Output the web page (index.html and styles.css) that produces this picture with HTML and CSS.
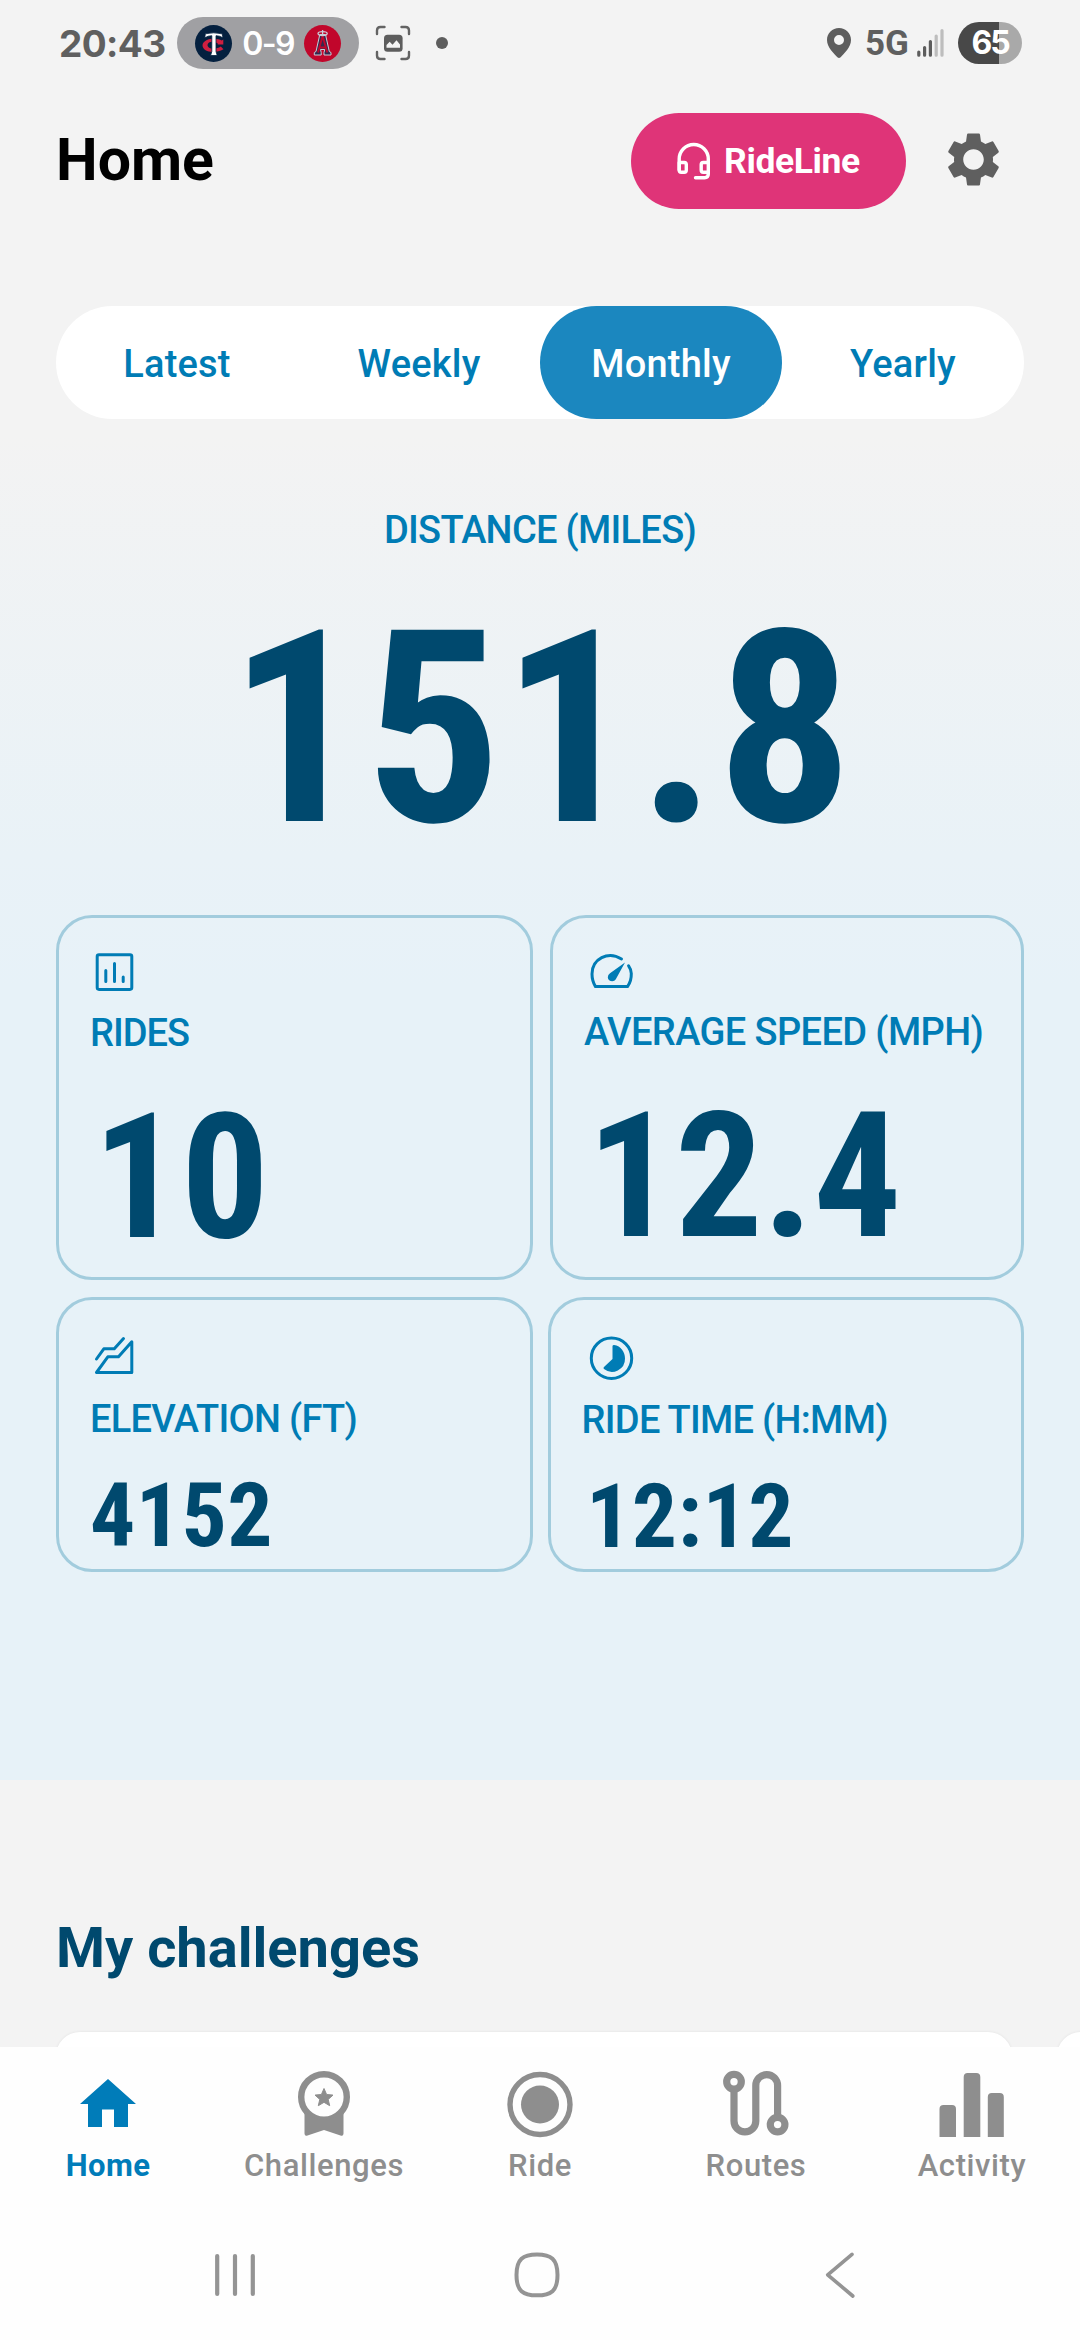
FILE: index.html
```html
<!DOCTYPE html>
<html lang="en">
<head>
<meta charset="utf-8">
<title>Home</title>
<link rel="stylesheet" href="styles.css">
</head>
<body>
<div class="screen">
  <div class="status">
    <span class="clock">20:43</span>
    <div class="score">
      <svg width="37" height="37" viewBox="0 0 37 37">
        <circle cx="18.5" cy="18.5" r="18.5" fill="#04203f"/>
        <path d="M28.300 19.500V14.500L26.800 15.600C22 12.300 8.500 12.800 7.500 20C7.500 27.500 20 29 28.500 24.300L25.800 21.500C21 24.800 12.500 24.300 12.500 20C12.500 16 20 15.600 23 18.800L22.500 19.500Z" fill="#d01f40"/>
        <path d="M9.800 12.800L10.300 8.800Q18.500 6.800 27.200 8.800L28 12.800Q24.500 10.700 21 10.700V26.500L22.200 30.500H15.600L16.800 26.500V10.700Q13 10.700 9.800 12.800Z" fill="#fff" stroke="#04203f" stroke-width=".8"/>
      </svg>
      <span class="score-text">0-9</span>
      <svg width="37" height="37" viewBox="0 0 37 37">
        <circle cx="18.500" cy="18.500" r="18.500" fill="#c1062b"/>
        <path d="M15.800 9.500L12 26.500L10.300 27.500V30H17.200V27.500L16.500 24.500H20.800L20 27.500V30H27V27.500L25.300 26.500L21.500 9.500Z" fill="#35294f" stroke="#c9ced8" stroke-width="1"/>
        <path d="M18.600 11L14 27.500M18.600 11L23.300 27.500M15.500 22.500H21.800" fill="none" stroke="#c1062b" stroke-width="1.900"/>
        <ellipse cx="18.600" cy="8.600" rx="4.600" ry="1.900" fill="none" stroke="#c9ced8" stroke-width="1.300"/>
        <path d="M18.600 5V9.500" stroke="#c9ced8" stroke-width="1.300"/>
      </svg>
    </div>
    <svg class="scan" width="36" height="36" viewBox="0 0 36 36">
      <path d="M2 9V5.500Q2 2 5.500 2H9.500M26.500 2H30.500Q34 2 34 5.500V9M34 27V30.500Q34 34 30.500 34H26.500M9.500 34H5.500Q2 34 2 30.500V27" fill="none" stroke="#636363" stroke-width="2.400" stroke-linecap="round"/>
      <rect x="9" y="9.700" width="18.600" height="17" rx="3.500" fill="#5d5d5d"/>
      <path d="M11.500 22.800V20L14.700 16.800L17.500 19.800L21.500 15.200L25 19.500V22.800Z" fill="#f3f3f3"/>
    </svg>
    <span class="dot"></span>
    <svg class="pin" width="24" height="30" viewBox="0 0 24 30">
      <path fill-rule="evenodd" d="M12 0C18.700 0 24 5.300 24 12C24 19.500 17 25.500 13.600 29.200Q12 30.600 10.400 29.200C7 25.500 0 19.500 0 12C0 5.300 5.300 0 12 0ZM12 7A5 5 0 1 0 12 17A5 5 0 1 0 12 7Z" fill="#5d5d5d"/>
    </svg>
    <span class="network">5G</span>
    <svg class="signal" width="27" height="30" viewBox="0 0 27 30" fill="none" stroke-width="3.200" stroke-linecap="round">
      <path d="M1.800 24V27.200M7.600 19.500V27.200M13.400 13.500V27.200" stroke="#5d5d5d"/>
      <path d="M19.200 8V27.200M25 2.500V27.200" stroke="#bdbdbd"/>
    </svg>
    <span class="battery">65</span>
  </div>

  <header class="header">
    <h1 class="title">Home</h1>
    <div class="rideline">
      <svg width="34" height="38" viewBox="0 0 34 38" fill="none" stroke="#fff" stroke-width="3.400" stroke-linecap="round" stroke-linejoin="round">
        <path d="M2.200 28V17A14.500 14.500 0 0 1 31.300 17V32Q31.300 35.700 27.600 35.700H18.500"/>
        <path d="M2.200 20.500H7.200Q9.300 20.500 9.300 22.600V28Q9.300 30.200 7.200 30.200H4.300Q2.200 30.200 2.200 28ZM31.300 20.500H26.300Q24.200 20.500 24.200 22.600V28Q24.200 30.200 26.300 30.200H31.300"/>
      </svg>
      <span>RideLine</span>
    </div>
    <svg class="gear" width="65" height="65" viewBox="0 0 24 24">
      <path fill="#5f5f5f" d="M19.140 12.940c.04-.3.060-.61.060-.94 0-.32-.02-.64-.07-.94l2.030-1.580c.18-.14.230-.41.120-.61l-1.920-3.320c-.12-.22-.37-.29-.59-.22l-2.390.960c-.5-.38-1.030-.7-1.620-.94l-.36-2.540c-.04-.24-.24-.41-.48-.41h-3.840c-.24 0-.43.170-.47.410l-.36 2.540c-.59.240-1.130.570-1.620.940l-2.390-.96c-.22-.08-.47 0-.59.220L2.740 8.870c-.12.210-.08.470.120.610l2.030 1.580c-.05.3-.09.630-.09.940s.02.640.070.940l-2.030 1.580c-.18.140-.23.410-.12.610l1.920 3.320c.12.220.37.290.59.220l2.390-.96c.5.380 1.030.7 1.620.940l.36 2.540c.05.240.24.410.48.410h3.840c.24 0 .44-.17.470-.41l.36-2.540c.59-.24 1.130-.56 1.620-.94l2.390.96c.22.080.47 0 .59-.22l1.920-3.320c.12-.22.070-.47-.12-.61l-2.010-1.580zM12 15.800c-2.100 0-3.800-1.700-3.800-3.800s1.700-3.800 3.800-3.800 3.800 1.700 3.800 3.800-1.700 3.800-3.800 3.800z"/>
    </svg>
  </header>

  <main class="hero">
    <nav class="tabs">
      <span class="tab">Latest</span>
      <span class="tab">Weekly</span>
      <span class="tab active">Monthly</span>
      <span class="tab">Yearly</span>
    </nav>
    <div class="label distance-label">DISTANCE (MILES)</div>
    <div class="number distance">151.8</div>

    <div class="cards">
      <section class="card rides">
        <svg width="44" height="44" viewBox="0 0 44 44" fill="none" stroke="#007cb5" stroke-width="3" stroke-linecap="round">
          <rect x="5.200" y="4.800" width="34.600" height="34.600" rx="1.800"/>
          <path d="M13.800 20.500V31.500M22.500 13.500V31.500M31.200 27V31.500"/>
        </svg>
        <div class="label">RIDES</div>
        <div class="number">10</div>
      </section>
      <section class="card speed">
        <svg width="44" height="44" viewBox="0 0 44 44">
          <path d="M35.500 9C22 0.500 6 9 6 24Q6 31 9.500 36.600H41.500Q45.500 31 45.300 23.500Q45 19 42.600 15.800" fill="none" stroke="#007cb5" stroke-width="3" stroke-linecap="round" stroke-linejoin="round"/>
          <path d="M39 12.500L29.800 29.300C28 32.600 21.800 31.500 21.800 27.300Q21.800 24.800 24 23.300Z" fill="#007cb5"/>
        </svg>
        <div class="label">AVERAGE SPEED (MPH)</div>
        <div class="number">12.4</div>
      </section>
    </div>

    <div class="cards small">
      <section class="card elevation">
        <svg width="44" height="44" viewBox="0 0 44 44" fill="none" stroke="#007cb5" stroke-width="3" stroke-linecap="round" stroke-linejoin="round">
          <path d="M4.500 26L11.800 15.800H22.300L31.500 5.500"/>
          <path d="M4.500 39.500H39.800V8.800L26.500 23.800H15.800Z"/>
        </svg>
        <div class="label">ELEVATION (FT)</div>
        <div class="number">4152</div>
      </section>
      <section class="card time">
        <svg width="46" height="48" viewBox="0 0 46 48">
          <circle cx="24.500" cy="25.200" r="20.200" fill="none" stroke="#007cb5" stroke-width="3"/>
          <path d="M25.500 13.300Q25.500 12 27 12C34 13 38 19 38 25.500A13 13 0 0 1 17 36Q15.900 35 17 34L25.500 26Z" fill="#007cb5"/>
        </svg>
        <div class="label">RIDE TIME (H:MM)</div>
        <div class="number">12:12</div>
      </section>
    </div>
  </main>

  <section class="challenges">
    <h2 class="section-title">My challenges</h2>
    <div class="carousel">
      <div class="challenge"></div>
      <div class="challenge"></div>
    </div>
  </section>

  <nav class="bottom">
    <div class="item current">
      <svg width="72" height="72" viewBox="0 0 72 72"><path d="M36 11L64 36H56V59H42V41.500H30V59H16V36H8Z" fill="#007cb9"/></svg>
      <span>Home</span>
    </div>
    <div class="item">
      <svg width="72" height="72" viewBox="0 0 72 72">
        <circle cx="36" cy="29" r="22.800" fill="none" stroke="#8e8e8e" stroke-width="6.400"/>
        <path d="M16.500 43Q26 52 36 52Q46 52 55.500 43V65.500Q55.500 68.300 52.500 67.500L36 62L19.500 67.500Q16.500 68.300 16.500 65.500Z" fill="#8e8e8e"/>
        <path d="M36 20.500L38.600 26.500L45 27.100L40.200 31.400L41.700 37.700L36 34.300L30.300 37.700L31.800 31.400L27 27.100L33.400 26.500Z" fill="#8e8e8e" stroke="#8e8e8e" stroke-linejoin="round"/>
      </svg>
      <span>Challenges</span>
    </div>
    <div class="item">
      <svg width="72" height="72" viewBox="0 0 72 72">
        <circle cx="36" cy="36.500" r="30" fill="none" stroke="#8e8e8e" stroke-width="5.400"/>
        <circle cx="36" cy="36.500" r="19" fill="#8e8e8e"/>
      </svg>
      <span>Ride</span>
    </div>
    <div class="item">
      <svg width="72" height="72" viewBox="0 0 72 72" fill="none" stroke="#8e8e8e" stroke-width="7.200">
        <path d="M14 20V53A10.900 10.900 0 0 0 35.800 53V17.500A10.900 10.900 0 0 1 57.600 17.500V50"/>
        <circle cx="14" cy="13.700" r="7.300"/>
        <circle cx="57.600" cy="56.600" r="7.300"/>
      </svg>
      <span>Routes</span>
    </div>
    <div class="item">
      <svg width="72" height="72" viewBox="0 0 72 72" fill="#8e8e8e">
        <path d="M3.500 69V41Q3.500 37 7.500 37H16Q20 37 20 41V69ZM27.700 69V9Q27.700 5 31.700 5H40.300Q44.300 5 44.300 9V69ZM51.800 69V29Q51.800 25 55.800 25H63.800Q67.800 25 67.800 29V69Z"/>
      </svg>
      <span>Activity</span>
    </div>
  </nav>

  <div class="system">
    <svg width="48" height="48" viewBox="0 0 48 48" fill="none" stroke="#949494" stroke-width="4.200" stroke-linecap="round"><path d="M6.200 6V44M24 6V44M41.800 6V44"/></svg>
    <svg width="48" height="48" viewBox="0 0 48 48" fill="none" stroke="#949494" stroke-width="4"><path d="M24 4.500C38 4.500 44.500 9 44.500 25S38 45.300 24 45.300S3.500 41 3.500 25S10 4.500 24 4.500Z"/></svg>
    <svg width="48" height="48" viewBox="0 0 48 48" fill="none" stroke="#949494" stroke-width="3.600" stroke-linecap="round" stroke-linejoin="round"><path d="M37 4.300L12.700 24.800L37.800 46"/></svg>
  </div>
</div>
</body>
</html>
```
FILE: styles.css
```css
* { box-sizing: border-box; }

body {
  margin: 0;
  background: #f3f3f3;
  font-family: Roboto, "Liberation Sans", sans-serif;
}

svg { display: block; flex: none; overflow: visible; }

.screen {
  display: flex;
  flex-direction: column;
  width: 1080px;
  height: 2340px;
  overflow: hidden;
}

/* Status bar */
.status {
  display: flex;
  align-items: center;
  height: 86px;
  padding: 0 58px;
  font-family: Inter, Roboto, sans-serif;
  font-weight: 600;
  color: #5f5f5f;
}
.clock { width: 119px; padding-left: 1px; font-size: 37px; font-weight: 700; letter-spacing: -0.6px; }
.score {
  display: flex;
  align-items: center;
  justify-content: space-between;
  width: 182px;
  height: 52px;
  padding: 0 18px;
  border-radius: 26px;
  background: #a0a0a3;
}
.score-text { font-size: 32px; letter-spacing: -1.6px; color: #fff; }
.scan { margin-left: 16px; }
.dot { width: 12px; height: 12px; margin-left: 25px; border-radius: 6px; background: #5d5d5d; }
.pin { margin-left: auto; }
.network { width: 53px; margin-left: 13px; padding-left: 1px; font-family: Roboto, sans-serif; font-size: 35px; font-weight: 700; }
.battery {
  width: 64px;
  height: 42px;
  margin-left: 14px;
  border-radius: 21px;
  background: linear-gradient(90deg, #484848 0 41px, #a9a9a9 41px);
  font-size: 32px;
  font-weight: 700;
  line-height: 42px;
  letter-spacing: -2px;
  text-align: center;
  color: #fff;
}

/* Title row */
.header {
  display: flex;
  align-items: center;
  height: 150px;
  padding: 0 74px 0 56px;
}
.title { margin: 0 auto 2px 0; font-size: 59px; font-weight: 700; line-height: 70px; color: #000; }
.rideline {
  display: flex;
  align-items: center;
  justify-content: center;
  gap: 13px;
  width: 275px;
  height: 96px;
  border-radius: 48px;
  background: #df3478;
  font-size: 35.5px;
  font-weight: 700;
  letter-spacing: -0.4px;
  color: #fff;
}
.gear { margin: 0 0 4px 35px; }

/* Statistics */
.hero {
  height: 1544px;
  padding: 70px 56px 0;
  background: linear-gradient(#f3f3f3 200px, #e9f2f7 620px, #e7f2f8 750px);
}
.tabs {
  display: grid;
  grid-template-columns: repeat(4, 1fr);
  height: 113px;
  border-radius: 57px;
  background: #fff;
}
.tab {
  height: 113px;
  padding-top: 3px;
  border-radius: 57px;
  font-size: 38px;
  font-weight: 500;
  line-height: 110px;
  letter-spacing: 0.2px;
  text-align: center;
  color: #007cb5;
}
.tab.active { background: #1b87bf; color: #fff; }
.label {
  font-size: 38px;
  font-weight: 500;
  line-height: 44px;
  letter-spacing: -0.7px;
  white-space: nowrap;
  color: #007cb5;
}
.number {
  font-family: "Roboto Condensed", Roboto, sans-serif;
  font-stretch: 75%;
  font-weight: 700;
  white-space: nowrap;
  color: #00496e;
}
.distance-label { margin-top: 89px; text-align: center; }
.distance {
  margin: 42px 0 51px;
  padding-left: 2px;
  font-size: 269px;
  line-height: 270px;
  letter-spacing: 0.5px;
  text-align: center;
}
.cards { display: flex; justify-content: space-between; margin-bottom: 17px; }
.card {
  width: 477px;
  height: 365px;
  padding: 32px 0 0 31px;
  border: 3px solid #a2ccdd;
  border-radius: 36px;
}
.card svg { margin-left: 2px; }
.card .label { margin: 17px 0 0; }
.card .number { margin: 58px 0 0 3px; font-size: 174px; line-height: 130px; }
.rides .label { letter-spacing: -1px; }
.speed { width: 474px; }
.speed .label { margin-top: 16px; letter-spacing: -0.6px; }
.small .card { height: 275px; padding-top: 33px; }
.small .label { margin-top: 20px; }
.small .number { margin: 40px 0 0; font-size: 89.6px; line-height: 70px; letter-spacing: 0.5px; }
.small .time { width: 476px; padding-left: 30px; }
.small .time svg { margin-left: 6px; }
.small .time .label { margin: 17px 0 0 0.5px; }
.small .time .number { margin-left: 5px; }

/* Challenges carousel */
.challenges { height: 267px; padding: 135px 0 0 56px; overflow: hidden; }
.section-title { margin: 0; font-size: 56px; font-weight: 700; line-height: 66px; color: #00496e; }
.carousel { display: flex; gap: 45px; margin-top: 51px; }
.challenge {
  flex: none;
  width: 956px;
  height: 200px;
  border-radius: 24px;
  background: #fff;
  box-shadow: 0 0 3px rgba(0, 0, 0, 0.08);
}

/* App navigation */
.bottom {
  display: grid;
  grid-template-columns: repeat(5, 216px);
  height: 203px;
  padding-top: 21px;
  background: #fefefe;
}
.item {
  display: flex;
  flex-direction: column;
  align-items: center;
  gap: 8px;
  font-size: 31px;
  font-weight: 500;
  line-height: 36px;
  letter-spacing: 0.6px;
  color: #8e8e8e;
}
.current { font-weight: 700; letter-spacing: 0.4px; color: #007cb9; }

/* System navigation */
.system {
  display: grid;
  grid-template-columns: repeat(3, 302px);
  justify-items: center;
  height: 90px;
  padding-left: 84px;
  background: #fefefe;
}
```
